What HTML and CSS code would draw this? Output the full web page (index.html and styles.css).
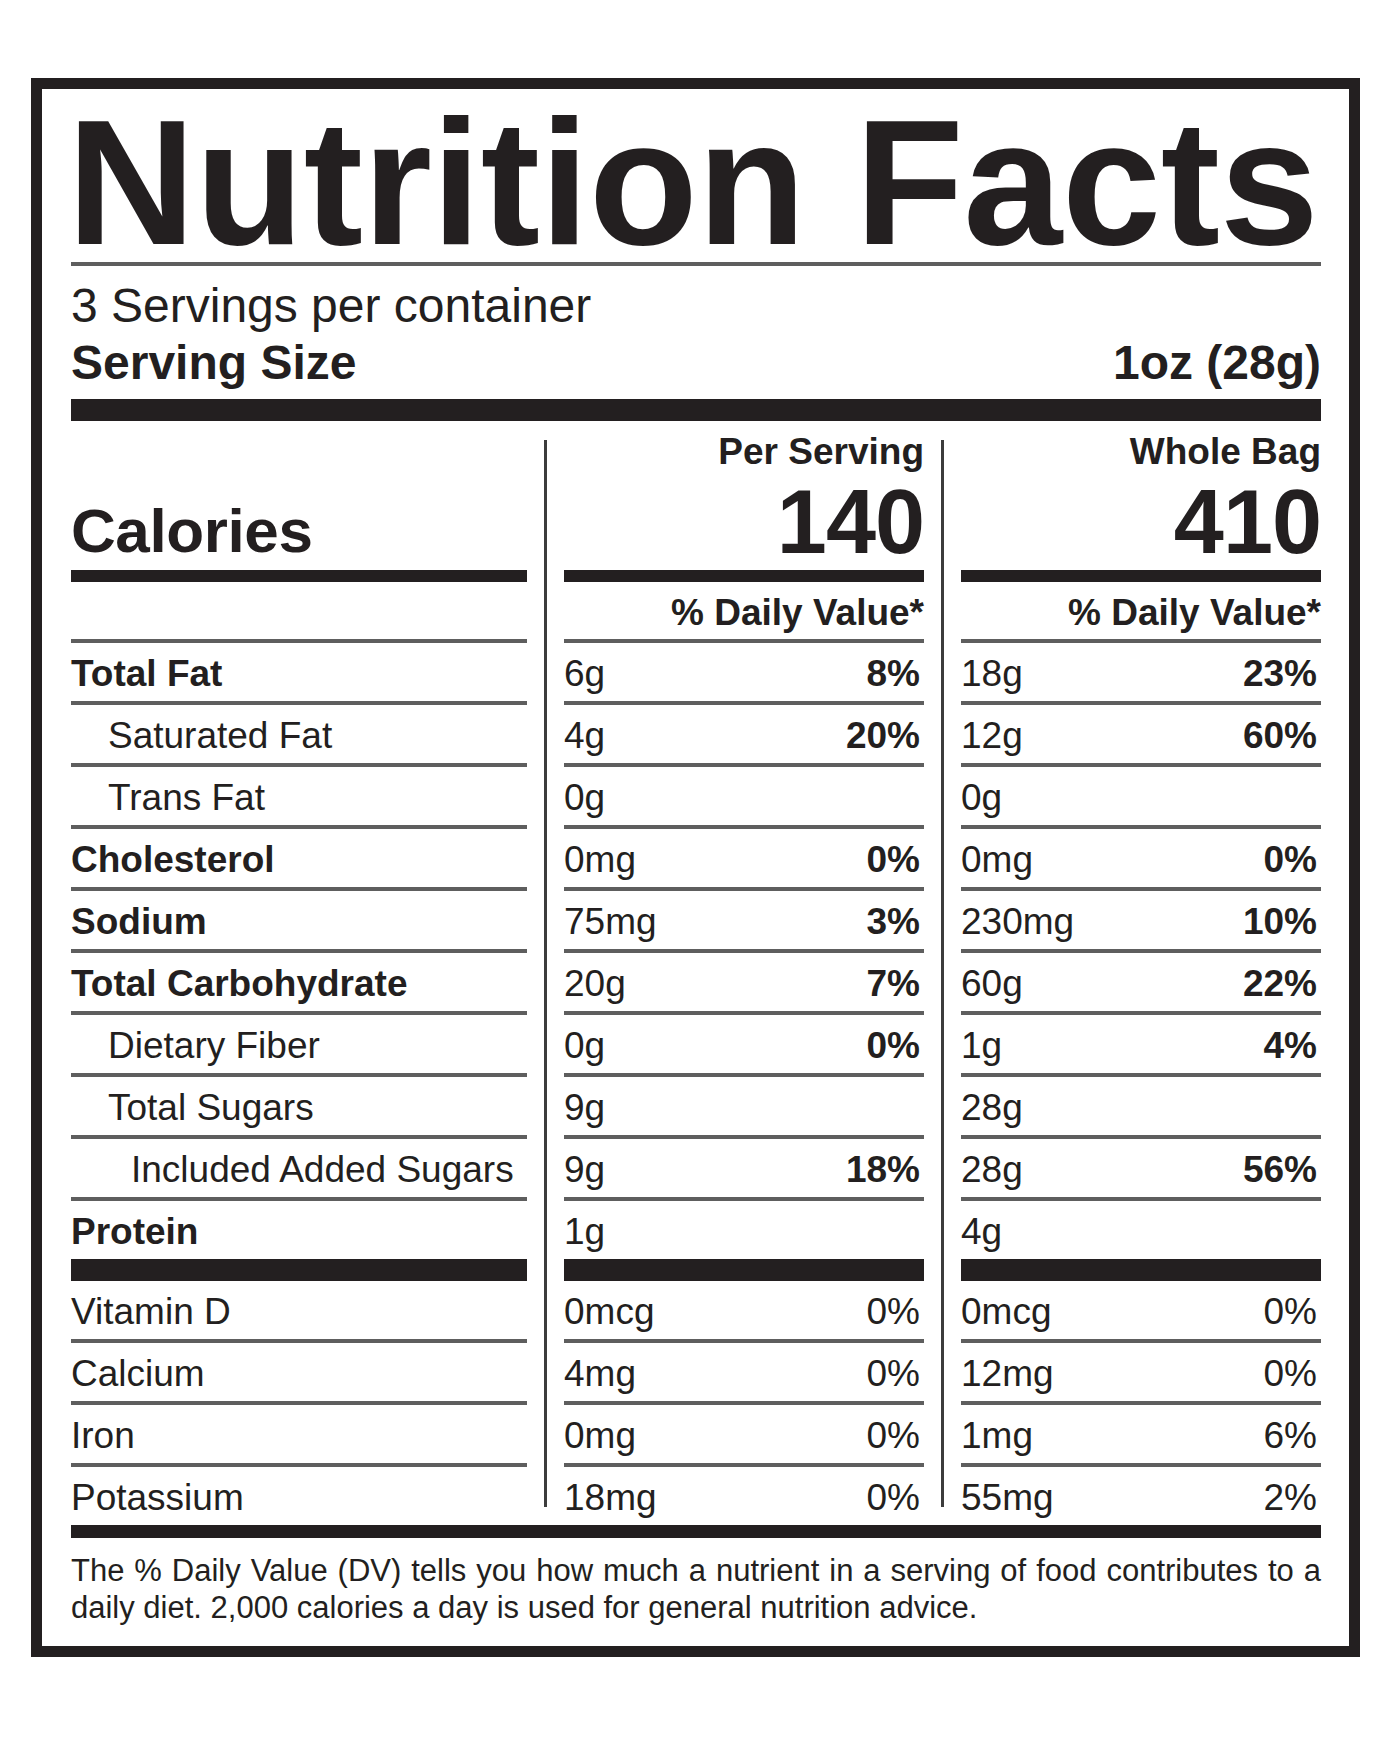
FILE: index.html
```html
<!DOCTYPE html>
<html lang="en">
<head>
<meta charset="utf-8">
<title>Nutrition Facts</title>
<link rel="stylesheet" href="styles.css">
</head>
<body>
<div class="label">
  <h1 class="title">Nutrition Facts</h1>
  <div class="rule-title"></div>
  <div class="servings">3 Servings per container</div>
  <div class="serving-size"><span>Serving Size</span><span>1oz (28g)</span></div>
  <div class="bar-thick bar-top"></div>

  <div class="panel">
    <div class="col col-labels">
      <div class="col-head head-left"><div class="calories">Calories</div></div>
      <div class="bar-mid"></div>
      <div class="row row-dv"></div>
      <div class="row b">Total Fat</div>
      <div class="row ind1">Saturated Fat</div>
      <div class="row ind1">Trans Fat</div>
      <div class="row b">Cholesterol</div>
      <div class="row b">Sodium</div>
      <div class="row b">Total Carbohydrate</div>
      <div class="row ind1">Dietary Fiber</div>
      <div class="row ind1">Total Sugars</div>
      <div class="row ind2">Included Added Sugars</div>
      <div class="row row-nob b">Protein</div>
      <div class="bar-thick"></div>
      <div class="row">Vitamin D</div>
      <div class="row">Calcium</div>
      <div class="row">Iron</div>
      <div class="row row-nob">Potassium</div>
    </div>

    <div class="divider"></div>

    <div class="col col-val">
      <div class="col-head head-val">
        <div class="head-sub">Per Serving</div>
        <div class="head-num">140</div>
      </div>
      <div class="bar-mid"></div>
      <div class="row row-dv dv-text">% Daily Value*</div>
      <div class="row vrow"><span>6g</span><span class="b">8%</span></div>
      <div class="row vrow"><span>4g</span><span class="b">20%</span></div>
      <div class="row vrow"><span>0g</span></div>
      <div class="row vrow"><span>0mg</span><span class="b">0%</span></div>
      <div class="row vrow"><span>75mg</span><span class="b">3%</span></div>
      <div class="row vrow"><span>20g</span><span class="b">7%</span></div>
      <div class="row vrow"><span>0g</span><span class="b">0%</span></div>
      <div class="row vrow"><span>9g</span></div>
      <div class="row vrow"><span>9g</span><span class="b">18%</span></div>
      <div class="row vrow row-nob"><span>1g</span></div>
      <div class="bar-thick"></div>
      <div class="row vrow"><span>0mcg</span><span>0%</span></div>
      <div class="row vrow"><span>4mg</span><span>0%</span></div>
      <div class="row vrow"><span>0mg</span><span>0%</span></div>
      <div class="row vrow row-nob"><span>18mg</span><span>0%</span></div>
    </div>

    <div class="divider"></div>

    <div class="col col-val col-last">
      <div class="col-head head-val">
        <div class="head-sub">Whole Bag</div>
        <div class="head-num">410</div>
      </div>
      <div class="bar-mid"></div>
      <div class="row row-dv dv-text">% Daily Value*</div>
      <div class="row vrow"><span>18g</span><span class="b">23%</span></div>
      <div class="row vrow"><span>12g</span><span class="b">60%</span></div>
      <div class="row vrow"><span>0g</span></div>
      <div class="row vrow"><span>0mg</span><span class="b">0%</span></div>
      <div class="row vrow"><span>230mg</span><span class="b">10%</span></div>
      <div class="row vrow"><span>60g</span><span class="b">22%</span></div>
      <div class="row vrow"><span>1g</span><span class="b">4%</span></div>
      <div class="row vrow"><span>28g</span></div>
      <div class="row vrow"><span>28g</span><span class="b">56%</span></div>
      <div class="row vrow row-nob"><span>4g</span></div>
      <div class="bar-thick"></div>
      <div class="row vrow"><span>0mcg</span><span>0%</span></div>
      <div class="row vrow"><span>12mg</span><span>0%</span></div>
      <div class="row vrow"><span>1mg</span><span>6%</span></div>
      <div class="row vrow row-nob"><span>55mg</span><span>2%</span></div>
    </div>
  </div>

  <div class="bar-foot"></div>
  <p class="footnote">The % Daily Value (DV) tells you how much a nutrient in a serving of food contributes to a daily diet. 2,000 calories a day is used for general nutrition advice.</p>
</div>
</body>
</html>
```

FILE: styles.css
```css
* {
  box-sizing: content-box;
}

body {
  margin: 0;
  background: #ffffff;
  font-family: "Liberation Sans", Arial, Helvetica, sans-serif;
  color: #231f20;
}

.label {
  width: 1250px;
  margin: 78px 0 0 31px;
  padding: 15px 28px 20px 29px;
  border: 11px solid #231f20;
}

.title {
  margin: 0;
  font-size: 178px;
  line-height: 158px;
  font-weight: 700;
  text-indent: -4px;
  white-space: nowrap;
  letter-spacing: -0.3px;
}

.rule-title {
  height: 4px;
  background: #5e5e5e;
}

.servings {
  margin-top: 16px;
  font-size: 48px;
  line-height: 48px;
}

.serving-size {
  margin-top: 9px;
  display: flex;
  justify-content: space-between;
  font-size: 48px;
  line-height: 48px;
  font-weight: 700;
}

.bar-thick {
  height: 22px;
  background: #231f20;
}

.bar-top {
  margin-top: 12px;
}

.panel {
  display: flex;
  margin-top: 11px;
}

.col {
  display: flex;
  flex-direction: column;
}

.col-labels {
  width: 456px;
}

.col-val {
  width: 360px;
}

.col-last {
  flex: 1;
}

.divider {
  width: 3px;
  margin: 8px 17px 18px;
  background: #3c3c3c;
}

.col-head {
  height: 138px;
  display: flex;
  flex-direction: column;
  justify-content: flex-end;
}

.calories {
  font-size: 62px;
  line-height: 62px;
  font-weight: 700;
  margin-bottom: 8px;
  letter-spacing: -0.4px;
}

.head-val {
  align-items: flex-end;
}

.head-sub {
  font-size: 37px;
  line-height: 40px;
  font-weight: 700;
}

.head-num {
  margin-top: 5px;
  margin-bottom: 3px;
  font-size: 90px;
  line-height: 90px;
  font-weight: 700;
  letter-spacing: -1px;
}

.bar-mid {
  height: 12px;
  background: #231f20;
}

.row {
  height: 56px;
  padding-top: 2px;
  line-height: 58px;
  font-size: 37px;
  border-bottom: 4px solid #5e5e5e;
  white-space: nowrap;
}

.row-dv {
  height: 54px;
  padding-top: 3px;
  line-height: 56px;
}

.row-nob {
  border-bottom: none;
}

.dv-text {
  text-align: right;
  font-weight: 700;
}

.b {
  font-weight: 700;
}

.ind1 {
  padding-left: 37px;
}

.ind2 {
  padding-left: 60px;
}

.vrow {
  display: flex;
  justify-content: space-between;
  padding-right: 4px;
}

.bar-foot {
  height: 13px;
  background: #231f20;
}

.footnote {
  margin: 14px 0 0;
  font-size: 31px;
  line-height: 37px;
  text-align: justify;
}
```
